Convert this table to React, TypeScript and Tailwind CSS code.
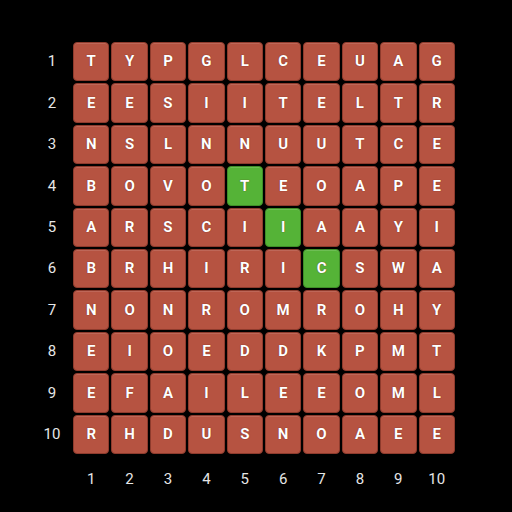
import React from "react";

const rows = [
  "TYPGLCEUAG",
  "EESIITELTR",
  "NSLNNUUTCE",
  "BOVOTEOAPE",
  "ARSCIIAAYI",
  "BRHIRICSWA",
  "NONROMROHY",
  "EIOEDDKPMT",
  "EFAILEEOML",
  "RHDUSNOAEE",
];

// highlighted word cells, "row-col"
const found = new Set(["3-4", "4-5", "5-6"]);

export default function App() {
  return (
    <div className="w-[512px] h-[512px] bg-black font-['Roboto',sans-serif] pt-[42px] pl-[36px]">
      <div className="flex gap-[5px]">
        <div className="grid grid-rows-[repeat(10,39.4px)] gap-y-[2px] w-[32px]">
          {rows.map((_, i) => (
            <div key={i} className="flex items-center justify-center text-[15px] text-[#e6e6e6]">
              {i + 1}
            </div>
          ))}
        </div>
        <div className="grid grid-cols-[repeat(10,36.4px)] grid-rows-[repeat(10,39.4px)] gap-[2px]">
          {rows.map((row, r) =>
            row.split("").map((ch, c) => {
              const hit = found.has(`${r}-${c}`);
              return (
                <div
                  key={`${r}-${c}`}
                  className={`flex items-center justify-center rounded-[4px] border text-[15px] font-bold text-white [text-shadow:0_0_1px_rgba(90,20,10,0.9)] ${
                    hit
                      ? "bg-[#55b337] border-[#3f8f28] shadow-[inset_0_1px_0_rgba(255,255,255,0.15)]"
                      : "bg-[#b65341] border-[#8e3b2d] shadow-[inset_0_1px_0_rgba(255,255,255,0.12)]"
                  }`}
                >
                  {ch}
                </div>
              );
            })
          )}
        </div>
      </div>
      <div className="flex pl-[37px] mt-[14px]">
        <div className="grid grid-cols-[repeat(10,36.4px)] gap-x-[2px]">
          {rows.map((_, i) => (
            <div key={i} className="flex justify-center text-[15px] text-[#e6e6e6]">
              {i + 1}
            </div>
          ))}
        </div>
      </div>
    </div>
  );
}
